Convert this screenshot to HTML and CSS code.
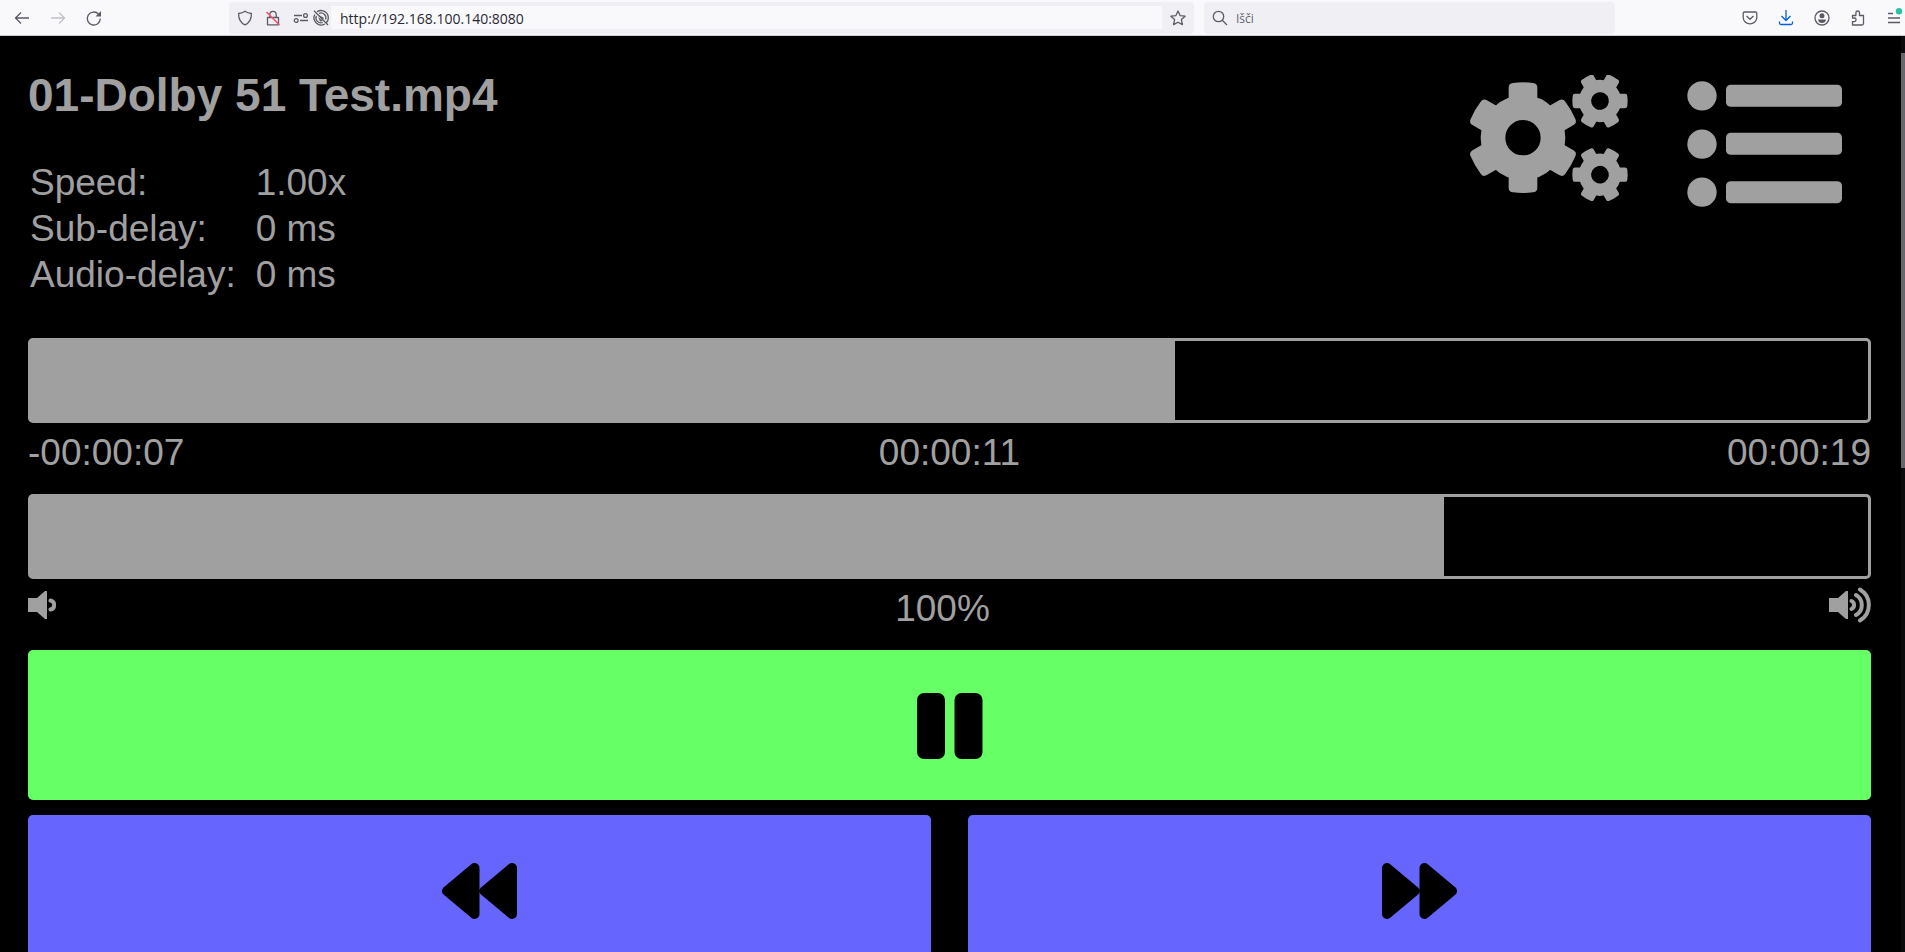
FILE: index.html
```html
<!DOCTYPE html>
<html lang="en">
<head>
<meta charset="utf-8">
<title>01-Dolby 51 Test.mp4</title>
<link rel="stylesheet" href="styles.css">
</head>
<body>
<header class="toolbar">
  <nav class="tool-group tool-group-start" aria-label="Navigation">
    <button class="tool" aria-label="Back"><svg class="icon" viewBox="0 0 16 16"><path d="M15 8H1.500M7 2.500L1.500 8L7 13.500"/></svg></button>
    <button class="tool" aria-label="Forward" disabled><svg class="icon" viewBox="0 0 16 16"><path d="M1 8h13.500M9 2.500L14.500 8L9 13.500"/></svg></button>
    <button class="tool" aria-label="Reload"><svg class="icon" viewBox="0 0 16 16"><path d="M14.300 8.500A6.500 6.500 0 1 1 12.500 4"/><path class="solid" d="M15 1v5.500h-5.500z"/></svg></button>
  </nav>
  <div class="spacer"></div>
  <div class="address">
    <svg class="icon" viewBox="0 0 16 16"><path d="M8 1.200C6 2.800 3.600 3.300 1.600 3.500C1.500 9 3.500 12.800 8 14.900C12.500 12.800 14.500 9 14.400 3.500C12.400 3.300 10 2.800 8 1.200z"/></svg>
    <svg class="icon" viewBox="0 0 16 16"><path d="M2.500 7.500h11v7.300h-11zM4.800 7.500V4.500a3.200 3.200 0 0 1 6.400 0v3"/><path class="alert" d="M1.500 2L14.500 15"/></svg>
    <svg class="icon" viewBox="0 0 16 16"><path d="M1 5.500h8M7 10.500h8"/><circle cx="12.500" cy="5.500" r="1.900"/><circle cx="3.200" cy="10.500" r="1.900"/></svg>
    <svg class="icon icon-near" viewBox="0 0 16 16"><path d="M4 1.800A7.200 7.200 0 0 1 13.500 12.500M11.800 14A7.200 7.200 0 0 1 1.800 4.500M1 .8L15 15M6 3.300A5 5 0 0 1 12.600 9.500M9.800 12.500A5 5 0 0 1 3.300 6"/><path class="solid" d="M6 5l5 3l-1.500 2zM5 7l5 4l-3 .5z"/></svg>
    <input class="address-input" type="text" aria-label="Address" value="http://192.168.100.140:8080">
    <button class="star" aria-label="Bookmark this page"><svg class="icon" viewBox="0 0 16 16"><path d="M8 1l2.100 4.600l5 .6l-3.700 3.400l1 5L8 12.200l-4.400 2.400l1-5L.9 6.200l5-.6z"/></svg></button>
  </div>
  <div class="search">
    <svg class="icon" viewBox="0 0 16 16"><circle cx="6.500" cy="6.500" r="5.200"/><path d="M10.300 10.300L15 15"/></svg>
    <input class="search-input" type="text" aria-label="Search" placeholder="Išči">
  </div>
  <div class="spacer"></div>
  <div class="tool-group">
    <button class="tool" aria-label="Pocket"><svg class="icon" viewBox="0 0 16 16"><path d="M2.500 2h11q1.300 0 1.300 1.300V7.500a6.800 6.300 0 0 1-13.600 0V3.300Q1.200 2 2.500 2zM4.500 6L8 9.300L11.500 6"/></svg></button>
    <button class="tool tool-active" aria-label="Downloads"><svg class="icon" viewBox="0 0 16 16"><path d="M8 0v10.500M3.500 6L8 10.500L12.500 6M1.500 11.500v1.500q0 1.500 1.500 1.500h10q1.500 0 1.500-1.500v-1.500"/></svg></button>
    <button class="tool" aria-label="Account"><svg class="icon" viewBox="0 0 16 16"><circle cx="8" cy="8" r="7"/><circle class="solid" cx="8" cy="5.800" r="2.500"/><path class="solid" d="M4 9.500h8q-.5 3.500-4 3.500t-4-3.500z"/></svg></button>
    <button class="tool" aria-label="Extensions"><svg class="icon" viewBox="0 0 16 16"><path d="M2.500 15h9.500q1.500 0 1.500-1.500V5.500H9.500V2.800a1.800 1.800 0 0 0-3.600 0V5.500H2.500V8h1.800a1.800 1.800 0 0 1 0 3.600H2.500z"/></svg></button>
    <button class="tool tool-menu" aria-label="Menu"><svg class="icon" viewBox="0 0 16 16"><path d="M1 3.500h5M1 8h12M1 12.500h12"/><circle class="badge" cx="12" cy="1.200" r="3.200"/></svg></button>
  </div>
</header>

<div class="viewport">
  <main class="player">
    <section class="head">
      <div class="info">
        <h1 class="title">01-Dolby 51 Test.mp4</h1>
        <table class="stats">
          <tr><th scope="row">Speed:</th><td>1.00x</td></tr>
          <tr><th scope="row">Sub-delay:</th><td>0 ms</td></tr>
          <tr><th scope="row">Audio-delay:</th><td>0 ms</td></tr>
        </table>
      </div>
      <div class="actions">
        <button class="action" aria-label="Settings">
          <svg class="glyph glyph-gears" viewBox="91 44 474 378">
            <defs>
              <path id="tooth" d="M-43-100V-150Q-43-163-30-164Q0-168 30-164Q43-163 43-150V-100Z"/>
              <g id="gear">
                <circle class="gear-ring" r="90"/>
                <use href="#tooth"/><use href="#tooth" transform="rotate(60)"/><use href="#tooth" transform="rotate(120)"/>
                <use href="#tooth" transform="rotate(180)"/><use href="#tooth" transform="rotate(240)"/><use href="#tooth" transform="rotate(300)"/>
              </g>
            </defs>
            <use href="#gear" transform="translate(250 232)"/>
            <use href="#gear" transform="translate(481 122) rotate(30) scale(.5)"/>
            <use href="#gear" transform="translate(481 343) rotate(30) scale(.5)"/>
          </svg>
        </button>
        <button class="action action-list" aria-label="Playlist">
          <svg class="glyph glyph-list" viewBox="741 64 465 377">
            <circle cx="786" cy="108" r="44"/><circle cx="786" cy="253" r="44"/><circle cx="786" cy="397" r="44"/>
            <rect x="858" y="75" width="348" height="66" rx="14"/><rect x="858" y="219" width="348" height="66" rx="14"/><rect x="858" y="364" width="348" height="66" rx="14"/>
          </svg>
        </button>
      </div>
    </section>

    <input class="bar" type="range" min="0" max="1000" value="623" aria-label="Position" style="--fill: 62.3%">
    <div class="times"><span>-00:00:07</span><span>00:00:11</span><span class="times-end">00:00:19</span></div>

    <input class="bar" type="range" min="0" max="1300" value="1000" aria-label="Volume" style="--fill: 76.9%">
    <div class="volume">
      <svg class="glyph glyph-low" viewBox="0 0 28 36"><path d="M0 11h9l8-7h2v28h-2l-8-7H0z"/><path class="wave" d="M22.500 13.500a4.600 4.600 0 0 1 0 9"/></svg>
      <span>100%</span>
      <svg class="glyph glyph-high" viewBox="0 0 42 36"><path d="M0 11h9l8-7h2v28h-2l-8-7H0z"/><path class="wave" d="M22.500 14a4.400 4.400 0 0 1 0 8M27 8a11.500 11.500 0 0 1 0 20M31 2.500a18 18 0 0 1 0 31"/></svg>
    </div>

    <button class="key key-play" aria-label="Pause"><svg class="key-icon" viewBox="0 0 66 66"><rect width="28" height="66" rx="7"/><rect x="37.500" width="28" height="66" rx="7"/></svg></button>
    <div class="key-row">
      <button class="key key-seek" aria-label="Rewind"><svg class="key-icon key-icon-wide" viewBox="0 0 75 56"><path d="M5 28L32.500 5V51zM42.500 28L70 5V51z"/></svg></button>
      <button class="key key-seek" aria-label="Fast forward"><svg class="key-icon key-icon-wide" viewBox="0 0 75 56"><path d="M32.500 28L5 5V51zM70 28L42.500 5V51z"/></svg></button>
    </div>
  </main>
  <div class="scroll"><div class="scroll-thumb"></div></div>
</div>
</body>
</html>
```

FILE: styles.css
```css
* { box-sizing: border-box; }

body {
  margin: 0;
  height: 100vh;
  display: flex;
  flex-direction: column;
  overflow: hidden;
  background: #000;
  color: #a0a0a0;
  font-family: "Liberation Sans", Arial, sans-serif;
}

button {
  padding: 0;
  border: 0;
  background: none;
  color: inherit;
}

svg { display: block; flex: none; }

/* Browser toolbar */
.toolbar {
  display: flex;
  align-items: center;
  flex: none;
  height: 36px;
  padding-top: 1px;
  padding-bottom: 1px;
  background: #f9f9fb;
  border-bottom: 1px solid #ccccd0;
  color: #5b5b66;
}

.tool-group { display: flex; flex: none; }
.tool-group-start { padding-left: 4px; }
.spacer { flex: 117 0 0; }

.tool {
  display: flex;
  align-items: center;
  justify-content: center;
  width: 36px;
  height: 32px;
}
.tool:disabled { color: #c0c0c6; }
.tool-active { color: #0061e0; }
.tool-menu {
  width: 29px;
  justify-content: flex-start;
  padding-left: 11px;
}

.icon {
  width: 16px;
  height: 16px;
  overflow: visible;
  fill: none;
  stroke: currentColor;
  stroke-width: 1.3;
  stroke-linejoin: round;
}
.icon .solid { fill: currentColor; stroke: none; }
.icon .alert { stroke: #ff4f6e; stroke-width: 1.6; }
.icon .badge { fill: #2ac3a2; stroke: none; }

.address, .search {
  display: flex;
  align-items: center;
  height: 32px;
  padding-left: 8px;
  background: #f0f0f4;
  border-radius: 4px;
}
.address { flex: 957 0 0; gap: 12px; margin-right: 10px; }
.icon-near { margin-left: -8px; }
.search { flex: 403 0 0; gap: 8px; }

.address-input {
  flex: 1;
  min-width: 0;
  height: 23px;
  margin: 0 -10px;
  padding: 2px 9px 0;
  border: 0;
  background: #f9f9fb;
  color: #2a2a33;
  font: 14px "Open Sans", "Noto Sans", sans-serif;
}
.star { margin: 0 8px 0 6px; }

.search-input {
  flex: 1;
  min-width: 0;
  padding: 2px 0 0;
  border: 0;
  background: none;
  font: 12px "Open Sans", "Noto Sans", sans-serif;
}
.search-input::placeholder { color: #65656f; }

/* Player page */
.viewport {
  display: flex;
  flex: 1;
  min-height: 0;
}

.player {
  flex: 1;
  min-width: 0;
  padding: 0 30px 0 28px;
  overflow: hidden;
  font-size: 37px;
  line-height: 42px;
}

.head {
  display: flex;
  justify-content: space-between;
  margin-bottom: 40px;
}
.title {
  margin: 32px 0 38px;
  font-size: 46px;
  line-height: 54px;
}
.stats { border-spacing: 0; line-height: 46px; }
.stats th {
  padding: 0 20px 0 2px;
  font-weight: normal;
  text-align: left;
}
.stats td { padding: 0; }

.actions {
  display: flex;
  align-items: flex-start;
  gap: 59px;
  padding: 39px 29px 0 0;
}
.action-list { padding-top: 6px; }

.glyph { fill: currentColor; }
.glyph-gears { width: 158px; height: 126px; }
.glyph-list { width: 155px; height: 126px; }
.glyph-low { width: 28px; height: 36px; }
.glyph-high { width: 42px; height: 36px; }
.gear-ring { fill: none; stroke: currentColor; stroke-width: 74px; }
.wave {
  fill: none;
  stroke: currentColor;
  stroke-width: 4px;
  stroke-linecap: round;
}

.bar {
  appearance: none;
  display: block;
  width: 100%;
  height: 85px;
  margin: 0 0 8px;
  border: 3px solid #a0a0a0;
  border-radius: 5px;
  background: linear-gradient(to right, #a0a0a0 var(--fill), #000 var(--fill));
}
.bar::-webkit-slider-thumb { appearance: none; width: 0; height: 0; }
.bar::-moz-range-thumb { width: 0; height: 0; border: 0; }

.times, .volume { margin-bottom: 19px; line-height: 44px; }
.times { display: grid; grid-template-columns: 1fr auto 1fr; }
.times-end { text-align: right; }
.volume { display: flex; justify-content: space-between; }

.key {
  display: flex;
  align-items: center;
  justify-content: center;
  width: 100%;
  height: 150px;
  padding-top: 2px;
  border-radius: 5px;
  color: #000;
}
.key-play { margin-bottom: 15px; background: #66ff66; }
.key-seek { background: #6666ff; }
.key-row {
  display: grid;
  grid-template-columns: 1fr 1fr;
  gap: 37px;
}
.key-icon { width: 66px; height: 66px; }
.key-icon-wide {
  width: 75px;
  height: 56px;
  stroke: #000;
  stroke-width: 10px;
  stroke-linejoin: round;
}

.scroll {
  width: 4px;
  padding-top: 17px;
  background: #0b0b0e;
}
.scroll-thumb { height: 46.2%; background: #67676b; }
```
